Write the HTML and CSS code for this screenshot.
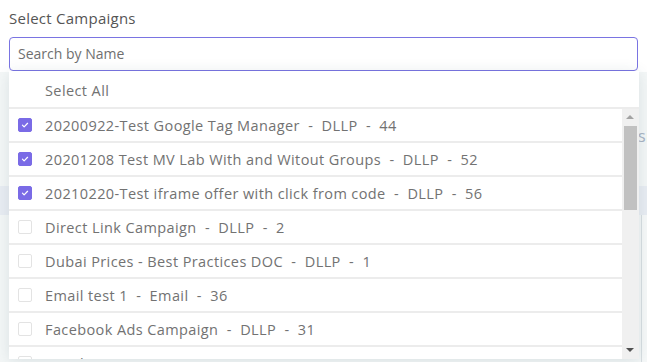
FILE: index.html
```html
<!DOCTYPE html>
<html>
<head>
<meta charset="utf-8">
<link rel="stylesheet" href="styles.css">
</head>
<body>
<div class="backdrop">
  <div class="bg-top"></div>
  <div class="bg-heading">sion</div>
  <div class="bg-band"></div>
  <div class="bg-table"></div>
</div>
<div class="field">
  <div class="label">Select Campaigns</div>
  <div class="search">Search by Name</div>
  <div class="panel">
    <div class="row all"><span class="box hidden"></span><span class="txt">Select All</span></div>
    <div class="list-wrap">
      <div class="list">
        <div class="row"><span class="box on"><svg viewBox="0 0 14 14"><path d="M4 7.2l2 2 4-4.2" fill="none" stroke="#fff" stroke-width="1.4" stroke-linecap="round" stroke-linejoin="round"/></svg></span><span class="txt">20200922-Test Google Tag Manager&nbsp; - &nbsp;DLLP&nbsp; - &nbsp;44</span></div>
        <div class="row"><span class="box on"><svg viewBox="0 0 14 14"><path d="M4 7.2l2 2 4-4.2" fill="none" stroke="#fff" stroke-width="1.4" stroke-linecap="round" stroke-linejoin="round"/></svg></span><span class="txt">20201208 Test MV Lab With and Witout Groups&nbsp; - &nbsp;DLLP&nbsp; - &nbsp;52</span></div>
        <div class="row"><span class="box on"><svg viewBox="0 0 14 14"><path d="M4 7.2l2 2 4-4.2" fill="none" stroke="#fff" stroke-width="1.4" stroke-linecap="round" stroke-linejoin="round"/></svg></span><span class="txt">20210220-Test iframe offer with click from code&nbsp; - &nbsp;DLLP&nbsp; - &nbsp;56</span></div>
        <div class="row"><span class="box"></span><span class="txt">Direct Link Campaign&nbsp; - &nbsp;DLLP&nbsp; - &nbsp;2</span></div>
        <div class="row"><span class="box"></span><span class="txt">Dubai Prices - Best Practices DOC&nbsp; - &nbsp;DLLP&nbsp; - &nbsp;1</span></div>
        <div class="row"><span class="box"></span><span class="txt">Email test 1&nbsp; - &nbsp;Email&nbsp; - &nbsp;36</span></div>
        <div class="row"><span class="box"></span><span class="txt">Facebook Ads Campaign&nbsp; - &nbsp;DLLP&nbsp; - &nbsp;31</span></div>
        <div class="row"><span class="box"></span><span class="txt">Heroku Test2&nbsp; - &nbsp;DLLP&nbsp; - &nbsp;33</span></div>
      </div>
      <div class="scrollbar">
        <div class="arrow up"></div>
        <div class="thumb"></div>
        <div class="track"></div>
        <div class="arrow down"></div>
      </div>
    </div>
  </div>
</div>
</body>
</html>
```
FILE: styles.css
```css
* { box-sizing: border-box; }
html, body { margin: 0; padding: 0; }
body {
  width: 647px;
  height: 362px;
  overflow: hidden;
  background: #f4f7f7;
  font-family: "Open Sans", "Noto Sans", sans-serif;
  position: relative;
}
.backdrop { position: absolute; inset: 0; }
.bg-top { position: absolute; left: 0; top: 0; right: 0; height: 72px; background: #fff; }
.bg-heading {
  position: absolute; left: 638px; top: 125px;
  font-size: 16px; color: #a8b4c4; letter-spacing: 0.3px;
}
.bg-band { position: absolute; left: 0; right: 0; top: 186px; height: 29px; background: #e9edf3; }
.bg-table {
  position: absolute; left: 641px; top: 215px; width: 10px; bottom: 0;
  border-left: 1px solid #d9dfe2; background: #f7f9f9;
}
.field {
  position: relative;
  padding: 8px 9px 0 9px;
}
.label {
  font-size: 15px;
  color: #555;
  height: 29px;
  line-height: 20px;
  letter-spacing: 0.25px;
}
.search {
  height: 34px;
  border: 1px solid #7a74e2;
  border-radius: 4px;
  padding: 0 8px;
  font-size: 14px;
  line-height: 31px;
  color: #6f6f6f;
  background: #fff;
}
.panel {
  position: absolute;
  left: 9px;
  top: 71px;
  width: 630px;
  height: 288px;
  background: #fff;
  box-shadow: 0 2px 14px rgba(40, 80, 90, 0.13);
  overflow: hidden;
}
.row {
  display: flex;
  align-items: center;
  height: 34px;
  border-bottom: 2px solid #ececec;
  padding-left: 9px;
}
.row.all { height: 38px; padding-top: 3px; }
.box {
  width: 14px; height: 14px;
  border: 1px solid #e3e3e3;
  border-radius: 2px;
  background: #fff;
  margin-right: 13px;
  flex: none;
  display: flex;
}
.box.hidden { visibility: hidden; }
.box.on { background: #7a6be6; border-color: #7a6be6; }
.box svg { width: 12px; height: 12px; }
.txt {
  font-size: 14.5px;
  color: #727272;
  white-space: nowrap;
  letter-spacing: 0.4px;
}
.list-wrap {
  display: flex;
  height: 250px;
}
.list { flex: 1; overflow: hidden; }
.scrollbar {
  width: 17px;
  background: #f0f0f0;
  display: flex;
  flex-direction: column;
  align-items: center;
}
.arrow { width: 17px; height: 17px; position: relative; flex: none; }
.arrow.up::after {
  content: ""; position: absolute; left: 4px; top: 6px;
  border-left: 4px solid transparent; border-right: 4px solid transparent;
  border-bottom: 4px solid #a3a3a3;
}
.arrow.down::after {
  content: ""; position: absolute; left: 4px; top: 6px;
  border-left: 4px solid transparent; border-right: 4px solid transparent;
  border-top: 4px solid #505050;
}
.thumb { width: 13px; height: 84px; background: #c1c1c1; flex: none; }
.track { flex: 1; }
```
